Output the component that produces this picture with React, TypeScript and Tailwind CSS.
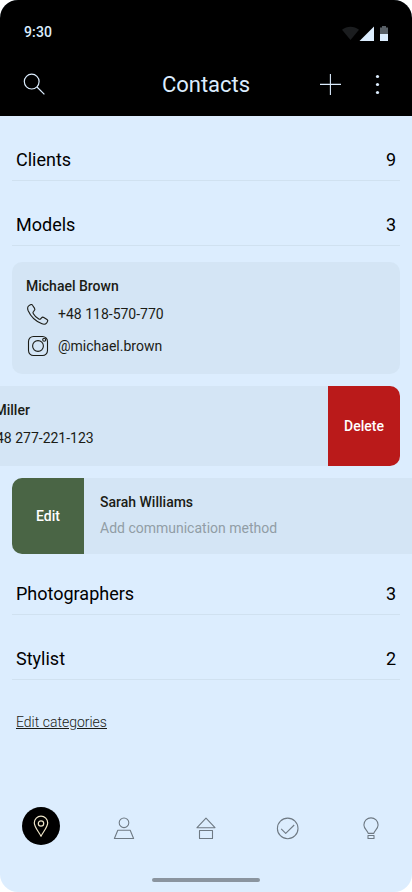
import type { ReactNode } from "react";

function Category({ name, count, className }: { name: string; count: number; className: string }) {
  return (
    <div className={`mx-3 flex h-[41px] items-center justify-between border-b border-[#d0e1f0] px-1 text-[18px] leading-6 text-black ${className}`}>
      <span>{name}</span>
      <span>{count}</span>
    </div>
  );
}

function PhoneIcon() {
  return (
    <svg width="24" height="24" viewBox="0 0 24 24" fill="none" stroke="#1b1c16" strokeWidth="1.1" strokeLinejoin="round" className="shrink-0">
      <path d="M3 3.6 4.4 2.7C5.2 2.2 6 2.4 6.5 3.2L8.6 6.4C9.1 7.3 8.9 8.1 8.2 8.7L7.6 9.3C6.9 9.9 6.8 10.7 7.2 11.4C8.5 13.6 10.5 15.7 12.8 17C13.5 17.4 14.3 17.3 14.9 16.6L15.5 15.9C16.1 15.2 17 15 17.8 15.5L21 17.5C21.8 18 22 18.8 21.5 19.6L20.7 20.8C19.6 22.3 17.8 22.5 16 21.8C9.7 19.4 4.9 14.9 2.2 8.8C1.3 6.6 1.2 4.9 3 3.6Z" />
    </svg>
  );
}

function InstagramIcon() {
  return (
    <svg width="24" height="24" viewBox="0 0 24 24" fill="none" stroke="#1b1c16" strokeWidth="1.1" className="shrink-0">
      <rect x="2.5" y="2.5" width="19" height="19" rx="5" />
      <circle cx="12" cy="12" r="5.4" />
      <circle cx="18.2" cy="5.8" r="1.5" />
    </svg>
  );
}

function NavIcon({ children }: { children: ReactNode }) {
  return (
    <svg width="24" height="24" viewBox="0 0 24 24" fill="none" stroke="#6f7a84" strokeWidth="1.1" strokeLinejoin="round" className="mt-[3px] shrink-0">
      {children}
    </svg>
  );
}

export default function App() {
  return (
    <div className="h-[892px] w-[412px] overflow-hidden bg-white font-[Roboto,sans-serif]">
      <div className="flex h-full w-full flex-col overflow-hidden rounded-[18px] bg-[#dcedfe]">
        <header className="h-[116px] shrink-0 bg-black text-[#dcedfe]">
          <div className="flex h-[52px] items-center justify-between pt-3 pr-6 pl-6">
            <span className="text-[14px] leading-5 font-medium tracking-[0.14px]">9:30</span>
            <svg width="46" height="16" viewBox="0 0 46 16" fill="#dcedfe" className="mt-1">
              <path d="M0 3.8C5 -.3 12 -.3 17 3.8L8.5 14Z" opacity=".12" />
              <path d="M17.5 15H32V.5Z" />
              <path d="M38 1.5H40V0H44V1.5H46V8H38Z" opacity=".4" />
              <path d="M38 8H46V15H38Z" />
            </svg>
          </div>
          <div className="flex h-16 items-center pr-[23px] pl-[22px]">
            <svg width="24" height="24" viewBox="0 0 24 24" fill="none" stroke="#dcedfe" strokeWidth="1.2">
              <circle cx="9.7" cy="9.6" r="7.4" />
              <path d="m15 15 7.4 7.4" />
            </svg>
            <h1 className="grow pt-px pl-12 text-center text-[22px] leading-7">Contacts</h1>
            <svg width="24" height="24" viewBox="0 0 24 24" fill="none" stroke="#dcedfe" strokeWidth="1.1">
              <path d="M12.4 2v21M2 12.4h21" />
            </svg>
            <svg width="24" height="24" viewBox="0 0 24 24" fill="#dcedfe" className="ml-[23px]">
              <circle cx="12.5" cy="4.5" r="1.6" />
              <circle cx="12.5" cy="12.5" r="1.6" />
              <circle cx="12.5" cy="20.5" r="1.6" />
            </svg>
          </div>
        </header>

        <main className="flex grow flex-col text-[14px] leading-5 text-[#1b1c16]">
          <Category name="Clients" count={9} className="mt-6" />
          <Category name="Models" count={3} className="mt-6" />

          <div className="mx-3 mt-4 h-28 rounded-[10px] bg-[#d4e5f5] px-[14px] pt-[14px]">
            <div className="font-medium">Michael Brown</div>
            <div className="mt-[6px] flex items-center gap-2">
              <PhoneIcon />
              <span>+48 118-570-770</span>
            </div>
            <div className="mt-2 flex items-center gap-2">
              <InstagramIcon />
              <span>@michael.brown</span>
            </div>
          </div>

          <div className="mt-3 mr-3 -ml-[58px] flex h-20">
            <div className="grow bg-[#d4e5f5] px-[14px] pt-[14px]">
              <div className="font-medium">David Miller</div>
              <div className="mt-[6px] flex items-center gap-2">
                <PhoneIcon />
                <span>+48 277-221-123</span>
              </div>
            </div>
            <button className="w-[72px] rounded-r-[10px] bg-[#ba1a1a] text-center font-medium text-white">Delete</button>
          </div>

          <div className="mt-3 ml-3 flex h-[76px]">
            <button className="w-[72px] rounded-l-[10px] bg-[#4a6545] text-center font-medium text-white">Edit</button>
            <div className="grow bg-[#d4e5f5] pt-[14px] pl-4">
              <div className="font-medium">Sarah Williams</div>
              <div className="mt-[6px] text-[#919da5]">Add communication method</div>
            </div>
          </div>

          <Category name="Photographers" count={3} className="mt-5" />
          <Category name="Stylist" count={2} className="mt-6" />

          <a className="mt-8 ml-4 self-start font-light text-[#1b1c16] underline">Edit categories</a>
        </main>

        <nav className="grid h-[54px] shrink-0 grid-cols-5 place-items-center pb-4">
          <span className="flex size-[38px] items-center justify-center rounded-full bg-black">
            <svg width="24" height="24" viewBox="0 0 24 24" fill="none" stroke="#eee5c8" strokeWidth="1.2" strokeLinejoin="round">
              <path d="M12 22.3C10.5 18.5 5.3 13.5 5.3 8.8A6.7 6.7 0 0 1 18.7 8.8C18.7 13.5 13.5 18.5 12 22.3Z" />
              <circle cx="12" cy="9.5" r="2.7" />
            </svg>
          </span>
          <NavIcon>
            <circle cx="12" cy="6.8" r="4.8" />
            <path d="M5.8 14.3h12.4l3.4 8.2H2.4Z" />
          </NavIcon>
          <NavIcon>
            <path d="m12 2.1 9 9.6H3ZM5.5 14.5h13v8h-13Z" />
          </NavIcon>
          <NavIcon>
            <circle cx="11.7" cy="12.4" r="10.3" />
            <path d="m5.2 12.8 4.5 4.5 8.5-8.3" />
          </NavIcon>
          <NavIcon>
            <path d="M9.2 17.4C8.6 14.6 4.9 12.8 4.9 9A7.1 7.1 0 0 1 19.1 9C19.1 12.8 15.4 14.6 14.8 17.4ZM9 19.5h6v3H9Z" />
          </NavIcon>
        </nav>
        <div className="flex h-[31px] shrink-0 justify-center pt-[17px]">
          <div className="h-1 w-[108px] rounded-full bg-[#8a949f]" />
        </div>
      </div>
    </div>
  );
}
